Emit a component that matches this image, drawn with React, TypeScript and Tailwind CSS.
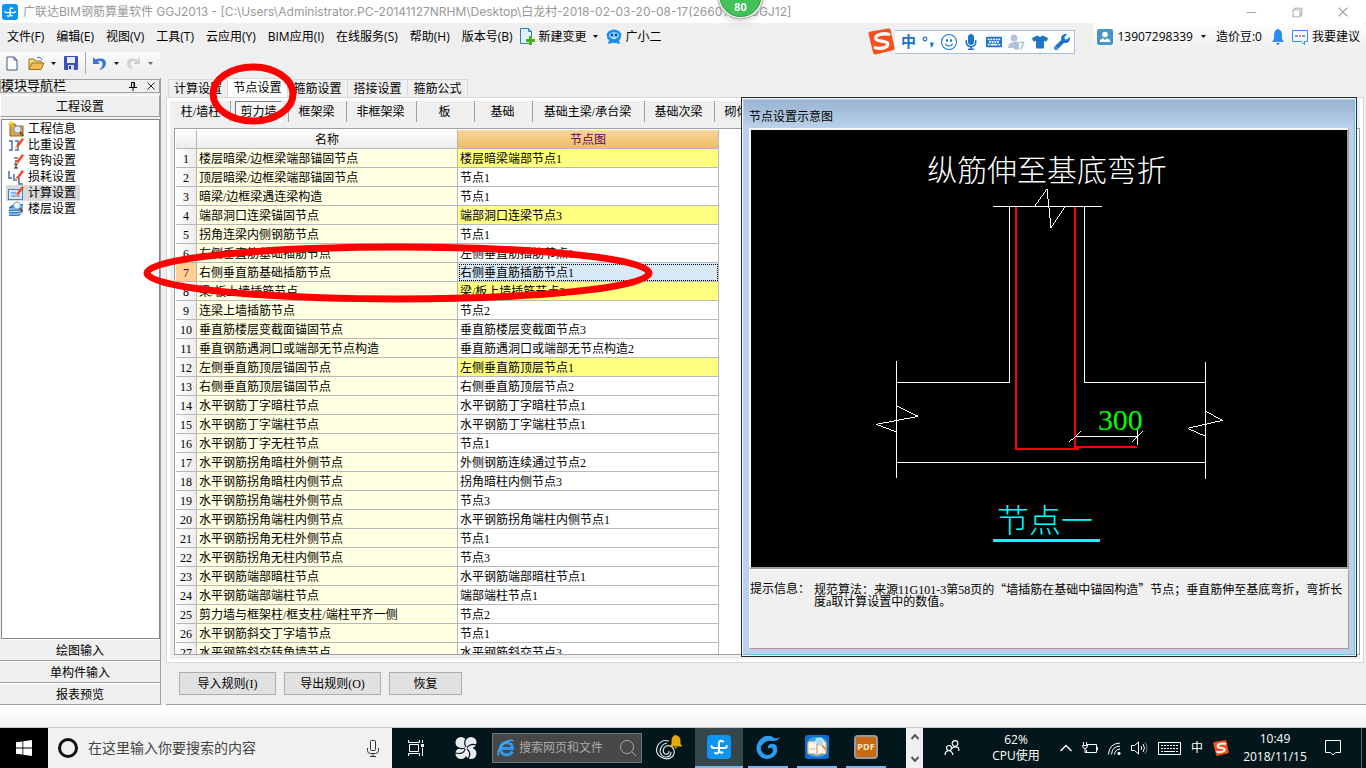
import React, { useState } from "react";
import clsx from "clsx";
import { FaTshirt, FaWrench, FaKeyboard, FaMicrophone } from "react-icons/fa";
import { BsEmojiSmile } from "react-icons/bs";
import { VscChromeMinimize, VscChromeRestore, VscChromeClose } from "react-icons/vsc";

const menus = [
  "文件(F)",
  "编辑(E)",
  "视图(V)",
  "工具(T)",
  "云应用(Y)",
  "BIM应用(I)",
  "在线服务(S)",
  "帮助(H)",
  "版本号(B)",
];

const tabs = ["计算设置", "节点设置", "箍筋设置", "搭接设置", "箍筋公式"];

const members = [
  { name: "柱/墙柱", width: "w-[58px]" },
  { name: "剪力墙", width: "w-[58px]" },
  { name: "框架梁", width: "w-[58px]" },
  { name: "非框架梁", width: "w-[70px]" },
  { name: "板", width: "w-[58px]" },
  { name: "基础", width: "w-[58px]" },
  { name: "基础主梁/承台梁", width: "w-[112px]" },
  { name: "基础次梁", width: "w-[70px]" },
  { name: "砌体结构", width: "w-[70px]" },
];

const rows = [
  { name: "楼层暗梁/边框梁端部锚固节点", node: "楼层暗梁端部节点1", changed: true },
  { name: "顶层暗梁/边框梁端部锚固节点", node: "节点1" },
  { name: "暗梁/边框梁遇连梁构造", node: "节点1" },
  { name: "端部洞口连梁锚固节点", node: "端部洞口连梁节点3", changed: true },
  { name: "拐角连梁内侧钢筋节点", node: "节点1" },
  { name: "左侧垂直筋基础插筋节点", node: "左侧垂直筋插筋节点1" },
  { name: "右侧垂直筋基础插筋节点", node: "右侧垂直筋插筋节点1" },
  { name: "梁/板上墙插筋节点", node: "梁/板上墙插筋节点2", changed: true },
  { name: "连梁上墙插筋节点", node: "节点2" },
  { name: "垂直筋楼层变截面锚固节点", node: "垂直筋楼层变截面节点3" },
  { name: "垂直钢筋遇洞口或端部无节点构造", node: "垂直筋遇洞口或端部无节点构造2" },
  { name: "左侧垂直筋顶层锚固节点", node: "左侧垂直筋顶层节点1", changed: true },
  { name: "右侧垂直筋顶层锚固节点", node: "右侧垂直筋顶层节点2" },
  { name: "水平钢筋丁字暗柱节点", node: "水平钢筋丁字暗柱节点1" },
  { name: "水平钢筋丁字端柱节点", node: "水平钢筋丁字端柱节点1" },
  { name: "水平钢筋丁字无柱节点", node: "节点1" },
  { name: "水平钢筋拐角暗柱外侧节点", node: "外侧钢筋连续通过节点2" },
  { name: "水平钢筋拐角暗柱内侧节点", node: "拐角暗柱内侧节点3" },
  { name: "水平钢筋拐角端柱外侧节点", node: "节点3" },
  { name: "水平钢筋拐角端柱内侧节点", node: "水平钢筋拐角端柱内侧节点1" },
  { name: "水平钢筋拐角无柱外侧节点", node: "节点1" },
  { name: "水平钢筋拐角无柱内侧节点", node: "节点3" },
  { name: "水平钢筋端部暗柱节点", node: "水平钢筋端部暗柱节点1" },
  { name: "水平钢筋端部端柱节点", node: "端部端柱节点1" },
  { name: "剪力墙与框架柱/框支柱/端柱平齐一侧", node: "节点2" },
  { name: "水平钢筋斜交丁字墙节点", node: "节点1" },
  { name: "水平钢筋斜交转角墙节点", node: "水平钢筋斜交节点3" },
];

const Caret = () => (
  <svg width="5" height="3" viewBox="0 0 5 3" className="shrink-0">
    <path d="M0 0h5L2.500 3z" fill="#111" />
  </svg>
);

const AppLogo = ({ size }: { size: number }) => (
  <svg width={size} height={size} viewBox="0 0 24 24" className="shrink-0">
    <rect width="24" height="24" rx="4" fill="#0c95f2" />
    <path
      d="M16 6.500q-4-2-4 2V15q0 4.500-4 3M4.500 11Q4.500 13 7 13h10.500q2.500 0 2.200-2M12 15q0 3 3.500 2.500"
      fill="none"
      stroke="#fff"
      strokeWidth="2"
      strokeLinecap="round"
    />
  </svg>
);

const SogouLogo = ({ size }: { size: number }) => (
  <svg width={size} height={size} viewBox="0 0 28 28" className="shrink-0">
    <path
      d="M2.500 3.500 21 .5q2-.3 2.500 1.500l4 18.500q.4 2-1.500 2.500L8 27.500q-2 .3-2.600-1.500L.5 6q-.4-2 2-2.500z"
      fill="#f4511e"
    />
    <path
      d="M21.500 6.500C15 5 7.500 7 8 11c.5 3.500 12 1.500 12.500 5.500.4 4-7.500 5.500-13 4"
      fill="none"
      stroke="#fff"
      strokeWidth="3.400"
      strokeLinecap="round"
    />
  </svg>
);

const RedPencil = () => (
  <g>
    <path d="M8 9 14 1l2 1.500L10.500 10 7 11z" fill="#ee4b2b" />
    <path d="M8 9l2.500 1L7 11z" fill="#f8c9a0" />
  </g>
);

const treeItems = [
  {
    name: "工程信息",
    icon: (
      <>
        <path d="M2 3h5l1 2h7v10H2z" fill="#d9a441" stroke="#8a6420" />
        <path d="M0 3h6M3 0v6M1 1l4 4M5 1 1 5" stroke="#f5c518" />
        <circle cx="9.500" cy="8.500" r="3.500" fill="#dcecfb" stroke="#8aa3c0" />
        <path d="m12 11 3 4" stroke="#7a4b20" strokeWidth="2" />
      </>
    ),
  },
  {
    name: "比重设置",
    icon: (
      <>
        <path d="M1 4h3v9H1M7 4h3v9H7" fill="none" stroke="#4a6ea8" strokeWidth="1.500" />
        <RedPencil />
      </>
    ),
  },
  {
    name: "弯钩设置",
    icon: (
      <>
        <path d="M6 5h4M8 7v8M6 15h4M6 11h4" fill="none" stroke="#222" strokeWidth="1.200" />
        <RedPencil />
      </>
    ),
  },
  {
    name: "损耗设置",
    icon: (
      <>
        <path d="M1 2v7h3M6 5v6h3M11 9v6h4" fill="none" stroke="#4a6ea8" strokeWidth="1.500" />
        <RedPencil />
      </>
    ),
  },
  {
    name: "计算设置",
    icon: (
      <>
        <rect x=".5" y="4.500" width="14" height="10" fill="#d6e8fa" stroke="#4a7fc0" />
        <path d="M3 8h5M3 11h9" stroke="#4a7fc0" />
        <RedPencil />
      </>
    ),
  },
  {
    name: "楼层设置",
    icon: (
      <>
        <path d="M1 6 6 3h9v8l-4 4H1z" fill="#2f7fd0" />
        <path d="M1 8h10l4-3M1 10.500h10l4-3M1 13h10l4-3" fill="none" stroke="#cfe5fb" />
        <circle cx="9" cy="4.500" r="3.500" fill="#e8f2fb" stroke="#8a9db5" />
        <path d="m11.500 7.500 3 3" stroke="#7a4b20" strokeWidth="2" />
      </>
    ),
  },
];

const TitleBar = () => (
  <header className="flex h-[23px] items-center bg-white pl-0.5 text-[#999]">
    <AppLogo size={16} />
    <h1 className="ml-[5px] flex-1 font-['Inter','Noto_Sans_CJK_SC',sans-serif] text-xs whitespace-nowrap">
      广联达BIM钢筋算量软件 GGJ2013 - [C:\Users\Administrator.PC-20141127NRHM\Desktop\白龙村-2018-02-03-20-08-17(2660180).GGJ12]
    </h1>
    <div className="flex h-full items-center gap-8 pr-4 text-sm">
      <button aria-label="minimize">
        <VscChromeMinimize />
      </button>
      <button aria-label="restore">
        <VscChromeRestore />
      </button>
      <button aria-label="close">
        <VscChromeClose />
      </button>
    </div>
  </header>
);

const MenuBar = () => (
  <nav className="flex h-[27px] items-center pl-[7px] text-xs whitespace-nowrap">
    <div className="flex gap-3">
      {menus.map((menu) => (
        <button key={menu}>{menu}</button>
      ))}
    </div>
    <button className="ml-1.5 flex items-center">
      <svg width="16" height="17" viewBox="0 0 16 17">
        <path d="M1.500.5h8l3 3v12h-11z" fill="#e3f1fb" stroke="#2f7db5" />
        <path d="M9.500.5v3h3" fill="none" stroke="#2f7db5" />
        <path d="M10 8v3H7v3h3v3h3v-3h3v-3h-3V8z" fill="#46b31c" />
      </svg>
      <span className="mr-1.5 ml-1">新建变更</span>
      <Caret />
    </button>
    <button className="ml-2 flex items-center gap-1">
      <svg width="16" height="16" viewBox="0 0 16 16">
        <path
          d="M3 2q5-3 10 0l2.500 3-1 5-1.500 1 1 4-4-1H6l-4 1 1-4-1.500-1-1-5z"
          fill="#1c90e8"
        />
        <ellipse cx="8" cy="6.500" rx="5" ry="3.500" fill="#7fcbff" />
        <circle cx="6" cy="6" r="1.200" fill="#0b3d75" />
        <circle cx="10" cy="6" r="1.200" fill="#0b3d75" />
        <path d="M6 9q2 1.500 4 0" fill="none" stroke="#fff" />
      </svg>
      广小二
    </button>
    <div className="ml-auto flex h-full items-center rounded bg-linear-to-b from-white to-[#efefef] pr-1.5 pl-1">
      <button className="flex items-center">
        <svg width="16" height="16" viewBox="0 0 16 16" className="mr-1">
          <rect width="16" height="16" rx="2" fill="#4296c8" />
          <circle cx="8" cy="5.500" r="2.800" fill="#fff" />
          <path d="M3 13v-2l3-2 2 2 2-2 3 2v2z" fill="#fff" />
        </svg>
        13907298339
        <span className="mr-2.5 ml-2">
          <Caret />
        </span>
      </button>
      <span>造价豆:0</span>
      <button aria-label="messages" className="mr-2 ml-2.5">
        <svg width="12" height="16" viewBox="0 0 12 16">
          <path d="M6 0q4 1 4 6v4l2 3H0l2-3V6q0-5 4-6z" fill="#2d8cf0" />
          <path d="M4 14h4l-2 2z" fill="#1769c0" />
        </svg>
      </button>
      <button className="flex items-center gap-1">
        <svg width="16" height="16" viewBox="0 0 16 16" fill="none" stroke="#2d8cf0">
          <path d="M.5 1.500h15v11h-3v3l-3-3h-9z" />
          <path d="M3 7h3M7 7h2M10 7h3" stroke="#333" />
        </svg>
        我要建议
      </button>
    </div>
  </nav>
);

const Toolbar = () => (
  <div className="flex h-7 items-start pt-0.5">
    <div className="flex h-[22px] w-[160px] items-center bg-linear-to-b from-[#fbfbfb] to-[#eee] pl-1.5">
      <button aria-label="new">
        <svg width="12" height="15" viewBox="0 0 12 15">
          <path d="M1 1h7l3 3v10H1z" fill="#fff" stroke="#3f5878" />
          <path d="M8 1v3h3" fill="none" stroke="#3f5878" />
        </svg>
      </button>
      <button aria-label="open" className="ml-2.5 flex items-center gap-1.5">
        <svg width="17" height="15" viewBox="0 0 17 15">
          <path d="M1 13V3h5l1 2h6v3" fill="#f7d774" stroke="#9a7322" />
          <path d="M1 13.500 4 7h12l-3 6.500z" fill="#f0bd4e" stroke="#9a7322" />
          <path d="M9 2q4-2 5 2" fill="none" stroke="#3f6fb5" />
        </svg>
        <Caret />
      </button>
      <button aria-label="save" className="ml-2">
        <svg width="14" height="14" viewBox="0 0 14 14">
          <rect width="14" height="14" rx="1" fill="#3d4fb8" />
          <rect x="3" y="1" width="8" height="6" fill="#e8ecfa" />
          <rect x="4" y="9" width="6" height="5" fill="#cfd6f0" />
          <rect x="5" y="10" width="2" height="3" fill="#26338a" />
        </svg>
      </button>
      <div className="mx-[7px] h-full w-px bg-[#aaa]" />
      <button aria-label="undo" className="flex items-center gap-2">
        <svg width="13" height="13" viewBox="0 0 13 13">
          <path d="M0 0v7h7L4.500 4.500Q9 3 9.500 6.500 9.500 10 6 13q6-1 7-6Q13 1 7 1.500 4 1.500 2.500 2.500z" fill="#3a78d4" />
        </svg>
        <Caret />
      </button>
      <button aria-label="redo" className="ml-2 flex items-center gap-2 opacity-60">
        <svg width="13" height="13" viewBox="0 0 13 13">
          <path
            d="M13 0v7H6l2.500-2.500Q4 3 3.500 6.500 3.500 9.500 6 12 0 11 0 6.500 0 1 6 1.500q3 0 4.500 1z"
            fill="#bbb"
          />
        </svg>
        <Caret />
      </button>
    </div>
  </div>
);

const SidePanel = () => {
  const [selected, setSelected] = useState("计算设置");

  return (
    <aside className="flex w-[161px] shrink-0 flex-col border-r border-[#a0a0a0]">
      <div className="mt-px flex h-[14px] items-center border border-[#a0a0a0] pr-1">
        <span className="flex-1 text-[13px] leading-3">模块导航栏</span>
        <button aria-label="pin" className="mr-2.5">
          <svg width="8" height="9" viewBox="0 0 8 9" stroke="#000" fill="none">
            <path d="M2.500.5h3v5h-3zM5 .5v5M0 5.500h8M4 6v3" />
          </svg>
        </button>
        <button aria-label="close panel">
          <svg width="8" height="8" viewBox="0 0 8 8" stroke="#222">
            <path d="m.5.5 7 7m0-7-7 7" />
          </svg>
        </button>
      </div>
      <button className="mt-0.5 h-[22px] shrink-0 border border-[#a0a0a0] border-t-white border-l-white pt-px">
        工程设置
      </button>
      <ul className="mt-0.5 ml-px min-h-0 flex-1 border border-[#828790] bg-white py-px pl-1">
        {treeItems.map(({ name, icon }) => (
          <li key={name} className="h-4">
            <button
              onClick={() => setSelected(name)}
              className={clsx(
                "flex h-4 items-center gap-1 pr-1 pl-0.5",
                selected === name && "bg-[#d9d9d9]"
              )}
            >
              <svg width="16" height="16" viewBox="0 0 16 16">
                {icon}
              </svg>
              {name}
            </button>
          </li>
        ))}
      </ul>
      {["绘图输入", "单构件输入", "报表预览"].map((item) => (
        <button
          key={item}
          className="h-[22px] shrink-0 border-t border-b border-t-white border-b-[#a0a0a0] pt-px"
        >
          {item}
        </button>
      ))}
    </aside>
  );
};

const NodeTable = () => (
  <table className="w-[543px] table-fixed border-separate border-spacing-0">
    <colgroup>
      <col className="w-[21px]" />
      <col className="w-[261px]" />
      <col className="w-[261px]" />
    </colgroup>
    <thead>
      <tr className="h-[19px]">
        <th className="border-r border-b border-[#b8b8b8] bg-linear-to-b from-white to-[#ececec]" />
        <th className="border-r border-b border-[#b8b8b8] bg-linear-to-b from-white to-[#ececec] pt-0.5 font-normal">
          名称
        </th>
        <th className="border-r border-b border-[#b8b8b8] bg-linear-to-b from-[#f9d69c] to-[#f0bd5f] pt-0.5 font-normal text-[#600060]">
          节点图
        </th>
      </tr>
    </thead>
    <tbody>
      {rows.map((row, i) => {
        const current = i === 6;
        return (
          <tr key={row.name} className="h-[19px]">
            <th
              className={clsx(
                "border-r border-b border-[#b8b8b8] pt-0.5 font-normal",
                current ? "bg-[#ffd090] text-[#600060]" : "bg-linear-to-r from-white to-[#ececec]"
              )}
            >
              {i + 1}
            </th>
            <td className="border-r border-b border-[#b8b8b8] bg-[#ffffe1] pt-0.5 pl-0.5 whitespace-nowrap">
              {row.name}
            </td>
            <td
              className={clsx(
                "border-r border-b border-[#b8b8b8] pt-0.5 pl-0.5 whitespace-nowrap",
                current && "bg-[#d8eaf8] outline-1 -outline-offset-2 outline-black outline-dotted",
                row.changed && "bg-[#ffff80]"
              )}
            >
              {row.node}
            </td>
          </tr>
        );
      })}
    </tbody>
  </table>
);

const Diagram = () => (
  <svg viewBox="0 0 596 438" className="min-h-0 w-full flex-1 bg-black" fill="none">
    <g stroke="#fff" shapeRendering="crispEdges">
      <path d="M242 76.500h109M258.500 77v176.500H145M333.500 77v176.500H454M145 333.500h309" />
      <path d="M145.500 232v117M454.500 233v117" />
      <path d="m284 76 12-17 4 39 14-21M146 277l21 10-42 8 21 8M455 282l17 9-35 8 18 8" />
    </g>
    <g stroke="#f00" strokeWidth="2" shapeRendering="crispEdges">
      <path d="M265 77v243h63M324 77v241h62" />
    </g>
    <g stroke="#fff" shapeRendering="crispEdges">
      <path d="M324 307.500h62M386.500 299v17M318 313l12-11M381 313l11-11" />
    </g>
    <path d="M242 411.500h107" stroke="#0ff" strokeWidth="3" />
    <g className="font-['Liberation_Serif','Noto_Sans_CJK_SC',serif] font-light">
      <text x="176" y="51" fontSize="30" fill="#fff">
        纵筋伸至基底弯折
      </text>
      <text x="347" y="301" fontSize="30" fill="#0f0">
        300
      </text>
      <text x="246" y="403" fontSize="32" fill="#0ff">
        节点一
      </text>
    </g>
  </svg>
);

const NodeDialog = () => (
  <section className="absolute top-[19px] right-[9px] bottom-12 flex w-[616px] flex-col border border-[#2b2b2b] bg-[#b9d1ea] px-[7px] pb-[7px] shadow-[inset_0_0_0_1px_#e8f4ff,inset_-2px_-2px_0_0_#5ecbf0]">
    <h2 className="-mx-[5px] mt-0.5 h-7 shrink-0 bg-linear-to-b from-[#99b4d1] to-[#b9d1ea] pt-[7px] pl-[5px] text-xs leading-5">
      节点设置示意图
    </h2>
    <div className="flex min-h-0 flex-1 flex-col border-2 border-[#f8f8f8] border-r-[#a0a0a0] border-b-[#a0a0a0]">
      <Diagram />
    </div>
    <div className="flex h-20 shrink-0 border border-white border-r-[#a0a0a0] border-b-[#a0a0a0] bg-[#f0f0f0] pt-[13px] leading-3 whitespace-nowrap">
      <span className="w-16 shrink-0">提示信息：</span>
      <p>
        规范算法：来源11G101-3第58页的
        <q className="font-['Noto_Sans_CJK_SC',sans-serif] before:content-['“'] after:content-['”']">
          墙插筋在基础中锚固构造
        </q>
        节点；垂直筋伸至基底弯折，弯折长
        <br />
        度a取计算设置中的数值。
      </p>
    </div>
  </section>
);

const SettingsPanel = () => {
  const [tab, setTab] = useState("节点设置");
  const [member, setMember] = useState("剪力墙");

  return (
    <main className="relative ml-[5px] flex min-w-0 flex-1 flex-col">
      <div className="flex h-[19px] shrink-0 items-end pl-0.5">
        {tabs.map((t) => (
          <button
            key={t}
            onClick={() => setTab(t)}
            className={clsx(
              "w-[60px] border-t border-r border-[#d9d9d9] first:border-l",
              tab === t ? "h-[19px] bg-white" : "h-[18px]"
            )}
          >
            {t}
          </button>
        ))}
      </div>
      <div className="mr-0.5 flex min-h-0 flex-1 flex-col border border-[#d9d9d9] bg-white px-[3px] py-[3px]">
        <div className="flex h-[27px] shrink-0 overflow-hidden bg-[#efefef] pl-[3px]">
          {members.map(({ name, width }) => (
            <div
              key={name}
              className={clsx("flex h-[21px] shrink-0 justify-center border-r border-[#a0a0a0] pr-1.5 pl-1", width)}
            >
              <button
                onClick={() => setMember(name)}
                className={clsx(
                  "h-full flex-1 border whitespace-nowrap",
                  member === name
                    ? "border-[#777] border-r-white border-b-white bg-[#f7f7f7]"
                    : "border-transparent"
                )}
              >
                {name}
              </button>
            </div>
          ))}
        </div>
        <div className="flex min-h-0 flex-1 flex-col bg-[#efefef] pb-1 pl-1">
          <div className="min-h-0 flex-1 overflow-hidden border border-[#a0a0a8] bg-white pt-px pl-px">
            <NodeTable />
          </div>
        </div>
      </div>
      <div className="flex h-[42px] shrink-0 gap-2 border-b border-[#a0a0a0] pt-[9px] pl-[13px]">
        <button className="h-[23px] w-[97px] border border-[#adadad] bg-[#e1e1e1]">导入规则(I)</button>
        <button className="h-[23px] w-[97px] border border-[#adadad] bg-[#e1e1e1]">导出规则(O)</button>
        <button className="h-[23px] w-[73px] border border-[#adadad] bg-[#e1e1e1]">恢复</button>
      </div>
      <NodeDialog />
    </main>
  );
};

const SogouBar = () => (
  <div className="absolute top-7 left-[868px] flex items-center text-[#1b74c5]">
    <SogouLogo size={27} />
    <div className="flex h-6 w-[180px] items-center justify-between border border-l-0 border-[#a9c0d6] bg-[#fbfdff] pr-1 pl-1.5 text-base">
      <span className="text-[15px] font-bold">中</span>
      <svg width="12" height="12" viewBox="0 0 12 12">
        <circle cx="3" cy="3" r="1.800" fill="none" stroke="currentColor" strokeWidth="1.200" />
        <path d="M8 6.500h3.500q.5 3-3 5.500 1-2 0-3z" fill="currentColor" />
      </svg>
      <BsEmojiSmile />
      <FaMicrophone />
      <FaKeyboard />
      <svg width="17" height="16" viewBox="0 0 17 16">
        <circle cx="6" cy="4" r="3.500" fill="#b3c3dc" />
        <path d="M0 14q0-6 6-6 4 0 5 2v4z" fill="#b3c3dc" />
        <text x="6" y="15" fontSize="9" fill="#fff" stroke="#9fb1cc" strokeWidth=".6">
          27
        </text>
      </svg>
      <FaTshirt />
      <FaWrench />
    </div>
  </div>
);

const FloatBall = () => (
  <svg
    width="56"
    height="26"
    viewBox="0 0 56 26"
    className="absolute top-0 left-[713px] font-bold drop-shadow-md"
  >
    <circle cx="27.500" cy="-4" r="23" fill="#e9e9e9" stroke="#aaa" />
    <circle cx="27.500" cy="-4" r="20.500" fill="#43c25a" stroke="#2c9a42" />
    <text x="27.500" y="11" fontSize="11" fill="#fff" textAnchor="middle">
      80
    </text>
  </svg>
);

// hand-drawn markers over the active tab and row 7
const Markers = () => (
  <>
    <svg
      width="88"
      height="62"
      viewBox="0 0 88 62"
      className="pointer-events-none absolute top-[63px] left-[209px]"
    >
      <ellipse cx="44" cy="31" rx="40" ry="27" fill="none" stroke="#f00" strokeWidth="7" />
    </svg>
    <svg
      width="510"
      height="60"
      viewBox="0 0 510 60"
      className="pointer-events-none absolute top-[243px] left-[143px]"
    >
      <ellipse cx="255" cy="30" rx="251" ry="26" fill="none" stroke="#f00" strokeWidth="7" />
    </svg>
  </>
);

const Taskbar = () => (
  <footer className="flex h-10 shrink-0 bg-[#03161b] text-xs whitespace-nowrap text-white">
    <button aria-label="start" className="flex w-12 items-center justify-center bg-black">
      <svg width="16" height="16" viewBox="0 0 16 16" fill="#fff">
        <path d="M0 2.300 6.500 1.400v6.200H0zM7.300 1.300 16 0v7.600H7.300zM0 8.400h6.500v6.200L0 13.700zM7.300 8.400H16V16l-8.700-1.300z" />
      </svg>
    </button>
    <div className="flex w-[344px] items-center bg-[#f1f1f1] pr-3 pl-2.5 text-[#333]">
      <svg width="20" height="20" viewBox="0 0 20 20">
        <circle cx="10" cy="10" r="8.500" fill="none" stroke="#111" strokeWidth="3" />
      </svg>
      <input
        aria-label="在这里输入你要搜索的内容"
        placeholder="在这里输入你要搜索的内容"
        className="ml-2.5 min-w-0 flex-1 text-sm outline-none placeholder:text-[#444]"
      />
      <svg width="14" height="17" viewBox="0 0 14 17" fill="none" stroke="#333">
        <rect x="4.500" y=".5" width="5" height="10" rx="1" />
        <path d="M1.500 8v2.500q0 3 3 3h5q3 0 3-3V8M7 13.500v3M4 16.500h6" />
      </svg>
    </div>
    <button aria-label="task view" className="flex w-12 items-center justify-center">
      <svg width="17" height="16" viewBox="0 0 17 16" fill="none" stroke="#fff">
        <path d="M.5 0v2.500h11V0M.5 16v-2.500h11V16M1.500 4.500h9v7h-9zM14.500 0v3M14.500 8v8" />
        <path d="M13 4h3v3h-3z" fill="#fff" stroke="none" />
      </svg>
    </button>
    <button aria-label="pinwheel" className="flex w-[52px] items-center justify-center">
      <svg width="22" height="22" viewBox="0 0 22 22">
        <g fill="#e9ecee">
          <circle cx="6" cy="5.500" r="5.500" />
          <circle cx="16" cy="5.500" r="5.500" />
          <circle cx="6" cy="16.500" r="5.500" />
          <circle cx="16" cy="16.500" r="5.500" />
          <rect x="4" y="4" width="14" height="14" />
        </g>
        <path
          d="M11 10Q8 5 12 0M12 11q3-5 10-3M12 12q5 4 1 10M10 12q-1 6-10 4M10 11Q4 13 0 9"
          fill="none"
          stroke="#03161b"
          strokeWidth="1.200"
        />
      </svg>
    </button>
    <div className="my-[5px] flex w-[150px] items-center border border-[#6d7a7c] bg-[#474747] px-1">
      <svg width="18" height="18" viewBox="0 0 18 18" fill="none">
        <path
          d="M15.500 12.500Q13.500 16 9.500 16 3.500 15.500 3.500 9.500 4 3.500 9.500 3.500q6 .5 6 6h-11"
          stroke="#2f97ee"
          strokeWidth="3"
        />
        <path d="M2 16.500Q-1 13 5 6.500 13-1 16.500 2" stroke="#4fb0ff" strokeWidth="1.300" />
      </svg>
      <input
        aria-label="搜索网页和文件"
        placeholder="搜索网页和文件"
        className="ml-1 min-w-0 flex-1 outline-none placeholder:text-[#aaa]"
      />
      <svg width="18" height="18" viewBox="0 0 18 18" fill="none" stroke="#aaa">
        <circle cx="8" cy="8" r="6.500" />
        <path d="m13 13 4 4" />
      </svg>
    </div>
    <button aria-label="reminders" className="flex w-[53px] items-center justify-center">
      <svg width="28" height="26" viewBox="0 0 28 26" fill="none">
        <path
          d="M14 6Q7 4 3 10q-4 8 3 12 7 4 12-1 3-5-1-9-5-3-8 1-2 4 1 6 4 1 4-3M12 8q-6 1-7 8 1 6 6 6 5 0 5-5"
          stroke="#dfe5e7"
          strokeWidth="1.200"
        />
        <path d="M20.500 0q5 1 5 6v3l2 2.500h-13l2-2.500V6q0-5 4-6zM19 12h3l-1 2z" fill="#e6ac06" />
      </svg>
    </button>
    <button
      aria-label="GGJ2013"
      className="flex w-12 items-center justify-center border-b-2 border-[#76b9ed] bg-[#36464b]"
    >
      <AppLogo size={24} />
    </button>
    <button
      aria-label="browser"
      className="ml-[5px] flex w-10 items-center justify-center border-b-2 border-[#76b9ed]"
    >
      <svg width="24" height="24" viewBox="0 0 24 24">
        <path
          d="M24 2q-2 4-7 4-6-1-9 2-4 3-3 7 2 5 7 5 5-1 5-5 0-2-2-2-2-1-3 1-1-4 3-5 5-1 6 4 1 6-4 9-6 4-12 0-6-5-4-12Q3 3 10 1q5-1 8 2 3 1 6-1z"
          fill="#2a9df0"
        />
      </svg>
    </button>
    <button
      aria-label="reader"
      className="ml-[9px] flex w-10 items-center justify-center border-b-2 border-[#76b9ed]"
    >
      <svg width="24" height="24" viewBox="0 0 24 24">
        <rect width="24" height="24" rx="3" fill="#0f6fd0" />
        <rect x="2" y="2" width="20" height="20" rx="8" fill="#35a6f2" />
        <path d="M3 7q5-2 9 1 4-3 9-1v12q-5-1-9 1-4-2-9-1z" fill="#fff8ee" stroke="#e0a860" />
        <circle cx="14.500" cy="7" r="4" fill="#a9d8f7" stroke="#e7f5ff" />
        <path d="m17 10 4 5" stroke="#e09030" strokeWidth="2" />
        <path d="M5 14h2M8 14h2M12 9v10" stroke="#c98c50" />
      </svg>
    </button>
    <button
      aria-label="pdf"
      className="ml-[9px] flex w-10 items-center justify-center border-b-2 border-[#76b9ed]"
    >
      <span className="flex size-6 items-center justify-center rounded border-2 border-[#9a9a9a] bg-[#c96a12] text-[9px] font-bold text-[#fbe7cf]">
        PDF
      </span>
    </button>
    <div className="ml-5 flex w-[17px] flex-col items-center justify-between bg-[#f0f0f0] py-1.5">
      <svg width="8" height="6" viewBox="0 0 8 6" fill="none" stroke="#555" strokeWidth="2">
        <path d="m.5 5 3.500-4 3.500 4" />
      </svg>
      <svg width="8" height="6" viewBox="0 0 8 6" fill="none" stroke="#555" strokeWidth="2">
        <path d="m.5 1 3.500 4 3.500-4" />
      </svg>
    </div>
    <div className="ml-auto flex items-center">
      <button aria-label="people">
        <svg width="16" height="16" viewBox="0 0 16 16" fill="none" stroke="#fff" strokeWidth="1.200">
          <circle cx="11" cy="3.500" r="2.800" />
          <circle cx="5" cy="8" r="2.500" />
          <path d="M1 15q0-4 4-4.500 3 .5 4 4.500M8 8.500q3-3 6.500-.5l.5 3" />
        </svg>
      </button>
      <div className="ml-8 w-12 text-center leading-4">
        62%
        <br />
        CPU使用
      </div>
      <button aria-label="show hidden icons" className="ml-5">
        <svg width="12" height="8" viewBox="0 0 12 8" fill="none" stroke="#fff" strokeWidth="1.300">
          <path d="m.5 7 5.500-5.500L11.500 7" />
        </svg>
      </button>
      <div className="ml-2.5 flex items-center gap-2.5">
        <svg width="16" height="12" viewBox="0 0 16 12" fill="none" stroke="#fff">
          <path d="M5 2.500h9.500v8H4.500V8M15.500 5v3M1.500 0v3M4.500 0v3M.5 3.500h5q0 3-2.500 3-2.500 0-2.500-3M3 6.500v4h2" />
        </svg>
        <svg width="13" height="13" viewBox="0 0 13 13" fill="none" stroke="#fff">
          <path d="M.5 12.500Q1 1.500 12 1M3.500 12.500Q4 4.500 12 4M6.500 12.500Q7 7.500 12 7" />
          <circle cx="11" cy="11.500" r="1.200" fill="#fff" />
        </svg>
        <svg width="17" height="14" viewBox="0 0 17 14" fill="none" stroke="#fff">
          <path d="M.5 4.500h3l4-3.500v12l-4-3.500h-3zM10 5q1.500 2 0 4M12 3q3 4 0 8" />
          <path d="M14 1q4 6 0 12" stroke="#778" />
        </svg>
        <svg width="23" height="13" viewBox="0 0 23 13" fill="none" stroke="#fff">
          <path d="M.5.500h22v12H.5z" />
          <path d="M3 3.500h17M3 6.500h17" strokeDasharray="2 1" />
          <path d="M3 9.500h2M6 9.500h11M18 9.500h2" />
        </svg>
        <span className="text-xs">中</span>
        <SogouLogo size={16} />
      </div>
      <div className="ml-3.5 w-16 text-center leading-[18px]">
        10:49
        <br />
        2018/11/15
      </div>
      <button aria-label="notifications" className="ml-[18px]">
        <svg width="16" height="16" viewBox="0 0 16 16" fill="none" stroke="#fff">
          <path d="M.5.500h15v12h-5L8 15l-2.500-2.500h-5z" />
        </svg>
      </button>
      <div className="ml-5 h-10 w-[5px] border-l border-[#5a6568]" />
    </div>
  </footer>
);

const App = () => (
  <div className="relative flex h-screen flex-col overflow-hidden bg-[#efefef] font-['Open_Sans','Noto_Sans_CJK_SC',sans-serif] text-black">
    <TitleBar />
    <MenuBar />
    <Toolbar />
    <div className="flex min-h-0 flex-1 font-['Liberation_Serif','Noto_Sans_CJK_SC',sans-serif] text-xs leading-4">
      <SidePanel />
      <SettingsPanel />
    </div>
    <div className="h-[23px] shrink-0 border-b border-[#c8c8c8] bg-linear-to-b from-white to-[#f3f3f3]" />
    <Taskbar />
    <SogouBar />
    <FloatBall />
    <Markers />
  </div>
);

export default App;
